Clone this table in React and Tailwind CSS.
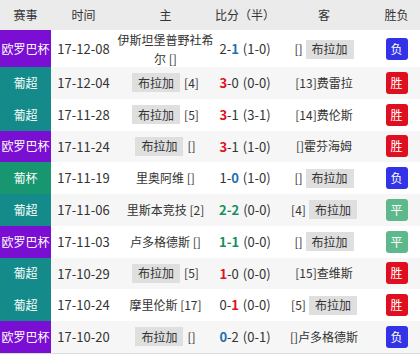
import React from "react";

const LEAGUE = {
  "欧罗巴杯": "bg-[#7a0ed3]",
  "葡超": "bg-[#148b8a]",
  "葡杯": "bg-[#17966f]",
};

const RES = {
  "胜": "bg-[#df0f20]",
  "负": "bg-[#3232e6]",
  "平": "bg-[#5db98b]",
};

const SC = {
  r: "text-[#e0101d] font-bold",
  b: "text-[#1f6fae] font-bold",
  g: "text-[#168f5c] font-bold",
};

function Box() {
  return (
    <span className="inline-flex items-center h-[19px] px-[6px] bg-[#dfdfdf] text-[#333]">布拉加</span>
  );
}

const rows = [
  { lg: "欧罗巴杯", t: "17-12-08", home: <span className="leading-[19px]">伊斯坦堡普野社希<br />尔 []</span>, s: ["2", "1", null, "b"], ht: "(1-0)", away: <><span>[]</span><span className="ml-[3px]"><Box /></span></>, r: "负", h: "h-[37px]" },
  { lg: "葡超", t: "17-12-04", home: <><Box /><span className="ml-[4px]">[4]</span></>, s: ["3", "0", "r", null], ht: "(0-0)", away: <span>[13]费雷拉</span>, r: "胜" },
  { lg: "葡超", t: "17-11-28", home: <><Box /><span className="ml-[4px]">[5]</span></>, s: ["3", "1", "r", null], ht: "(3-1)", away: <span>[14]费伦斯</span>, r: "胜" },
  { lg: "欧罗巴杯", t: "17-11-24", home: <><Box /><span className="ml-[4px]">[]</span></>, s: ["3", "1", "r", null], ht: "(1-0)", away: <span>[]霍芬海姆</span>, r: "胜" },
  { lg: "葡杯", t: "17-11-19", home: <span>里奥阿维 []</span>, s: ["1", "0", null, "b"], ht: "(1-0)", away: <><span>[]</span><span className="ml-[3px]"><Box /></span></>, r: "负" },
  { lg: "葡超", t: "17-11-06", home: <span>里斯本竞技 [2]</span>, s: ["2", "2", "g", "g"], ht: "(0-0)", away: <><span>[4]</span><span className="ml-[3px]"><Box /></span></>, r: "平" },
  { lg: "欧罗巴杯", t: "17-11-03", home: <span>卢多格德斯 []</span>, s: ["1", "1", "g", "g"], ht: "(0-0)", away: <><span>[]</span><span className="ml-[3px]"><Box /></span></>, r: "平" },
  { lg: "葡超", t: "17-10-29", home: <><Box /><span className="ml-[4px]">[5]</span></>, s: ["1", "0", "r", null], ht: "(0-0)", away: <span>[15]查维斯</span>, r: "胜" },
  { lg: "葡超", t: "17-10-24", home: <span>摩里伦斯 [17]</span>, s: ["0", "1", null, "r"], ht: "(0-0)", away: <><span>[5]</span><span className="ml-[3px]"><Box /></span></>, r: "胜" },
  { lg: "欧罗巴杯", t: "17-10-20", home: <><Box /><span className="ml-[4px]">[]</span></>, s: ["0", "2", "b", null], ht: "(0-1)", away: <span>[]卢多格德斯</span>, r: "负" },
];

const GRID = "grid grid-cols-[51px_65px_99px_60px_98px_47px]";

export default function App() {
  return (
    <div
      className="w-[420px] h-[355px] bg-white text-[#333] text-[12px] overflow-hidden"
      style={{ fontFamily: '"Noto Sans CJK SC", "Microsoft YaHei", sans-serif' }}
    >
      <div className={`${GRID} h-[30px] bg-[#ebebeb] items-center text-center text-[12px]`}>
        <div>赛事</div>
        <div>时间</div>
        <div>主</div>
        <div>比分（半）</div>
        <div>客</div>
        <div>胜负</div>
      </div>
      <div className="border-b border-[#dcdcdc]">
        {rows.map((row, i) => (
          <div
            key={i}
            className={`${GRID} ${row.h || "h-[31.75px]"} ${i % 2 === 1 ? "bg-[#f6f6f6]" : "bg-white"} items-stretch`}
          >
            <div className={`${LEAGUE[row.lg]} text-white flex items-center justify-center whitespace-nowrap`}>{row.lg}</div>
            <div className="flex items-center justify-center text-[13px]">{row.t}</div>
            <div className="flex items-center justify-center text-center whitespace-nowrap">{row.home}</div>
            <div className="flex items-center justify-center text-[13px] whitespace-nowrap">
              <span className={row.s[2] ? SC[row.s[2]] : ""}>{row.s[0]}</span>
              <span className={row.s[2] && row.s[3] ? SC[row.s[2]] : ""}>-</span>
              <span className={row.s[3] ? SC[row.s[3]] : ""}>{row.s[1]}</span>
              <span className="ml-[4px]">{row.ht}</span>
            </div>
            <div className="flex items-center justify-center whitespace-nowrap">{row.away}</div>
            <div className="flex items-center justify-center">
              <span className={`${RES[row.r]} w-[22px] h-[22px] rounded-[3px] text-white flex items-center justify-center`}>{row.r}</span>
            </div>
          </div>
        ))}
      </div>
    </div>
  );
}
